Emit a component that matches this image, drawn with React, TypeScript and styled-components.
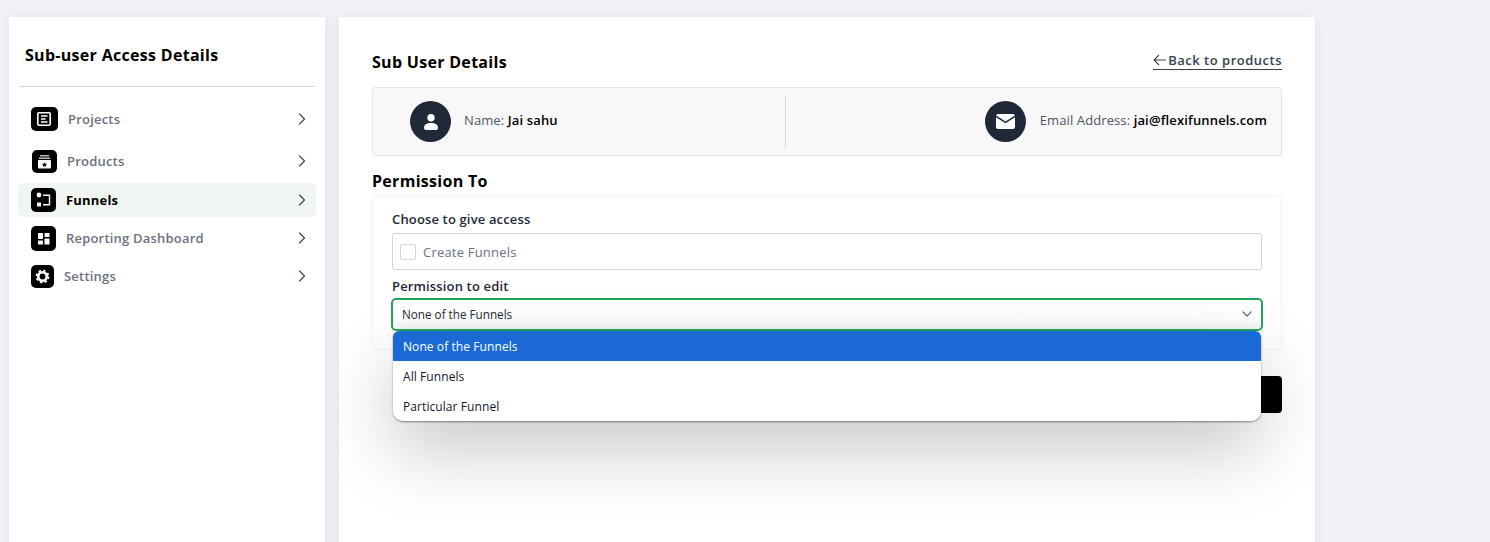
import React from "react";
import styled, { createGlobalStyle } from "styled-components";
import { ChevronRight, ChevronDown } from "lucide-react";

const GlobalStyle = createGlobalStyle`
  html, body {
    margin: 0;
    height: 100%;
    background: #f1f2f7;
    font-family: "Open Sans", "Liberation Sans", sans-serif;
    overflow: hidden;
  }
  * { box-sizing: border-box; }
`;

const Page = styled.div`
  display: flex;
  align-items: flex-start;
  gap: 14px;
  width: 1490px;
  height: 542px;
  padding: 17px 0 0 9px;
  overflow: hidden;
`;

const Sidebar = styled.aside`
  width: 316px;
  height: 560px;
  flex: none;
  background: #fff;
  padding: 27px 9px 0;
  box-shadow: 0 2px 12px rgba(80, 84, 120, 0.1);
`;

const SideTitle = styled.h2`
  margin: 0 0 0 7px;
  font-size: 16px;
  line-height: 22px;
  font-weight: 700;
  letter-spacing: 0.3px;
  color: #000;
`;

const SideRule = styled.hr`
  margin: 20px 1px 11px;
  border: 0;
  border-top: 1px solid #d5d5dc;
`;

const Nav = styled.nav`
  display: flex;
  flex-direction: column;
`;

const NavItem = styled.div<{ $active?: boolean; $height: number }>`
  display: flex;
  align-items: center;
  gap: 10px;
  height: ${(p) => p.$height}px;
  margin-top: ${(p) => (p.$active ? 1 : 0)}px;
  padding: 0 4px 0 13px;
  border-radius: 6px;
  background: ${(p) => (p.$active ? "#f0f5f2" : "transparent")};
  color: ${(p) => (p.$active ? "#000" : "#6b7280")};
  font-size: 13px;
  font-weight: ${(p) => (p.$active ? 700 : 600)};
  letter-spacing: 0.2px;
`;

const NavLabel = styled.span`
  flex: 1;
`;

const NavIcon = styled.svg<{ $inset?: number }>`
  flex: none;
  display: block;
  margin-left: ${(p) => p.$inset ?? 0}px;
`;

const Main = styled.main`
  position: relative;
  width: 976px;
  height: 560px;
  flex: none;
  overflow: hidden;
  background: #fff;
  padding: 33px 33px 0;
`;

const MainShade = styled.div`
  flex: none;
  box-shadow: 0 2px 12px rgba(80, 84, 120, 0.1);
`;

const HeadRow = styled.div`
  display: flex;
  align-items: flex-start;
  justify-content: space-between;
  height: 37px;
`;

const PageTitle = styled.h1`
  margin: 0;
  font-size: 16px;
  line-height: 24px;
  font-weight: 700;
  letter-spacing: 0.3px;
  color: #000;
`;

const BackLink = styled.a`
  display: flex;
  align-items: center;
  gap: 2px;
  height: 20px;
  border-bottom: 1px solid #374151;
  color: #374151;
  font-size: 13px;
  font-weight: 600;
  letter-spacing: 0.5px;
`;

const InfoBar = styled.section`
  display: flex;
  align-items: center;
  height: 69px;
  border: 1px solid #e5e5e5;
  border-radius: 3px;
  background: #f8f8f8;
`;

const NameCell = styled.div`
  width: 412px;
  flex: none;
  display: flex;
  align-items: center;
  gap: 13px;
  padding-left: 37px;
`;

const EmailCell = styled.div`
  flex: 1;
  display: flex;
  align-items: center;
  justify-content: flex-end;
  gap: 14px;
  padding-right: 14px;
`;

const InfoDivider = styled.div`
  width: 1px;
  height: 53px;
  flex: none;
  background: #d9d9d9;
`;

const Avatar = styled.div`
  width: 41px;
  height: 41px;
  flex: none;
  display: flex;
  align-items: center;
  justify-content: center;
  border-radius: 50%;
  background: #1f2937;
`;

const InfoText = styled.span`
  padding-bottom: 3px;
  font-size: 13px;
  color: #4b5563;
  letter-spacing: 0.1px;
  b {
    font-weight: 600;
    color: #000;
    letter-spacing: 0.15px;
  }
`;

const SectionTitle = styled.h3`
  margin: 13px 0 2px;
  font-size: 16px;
  line-height: 24px;
  font-weight: 700;
  letter-spacing: 0.3px;
  color: #000;
`;

const PermissionCard = styled.section`
  height: 155px;
  padding: 14px 19px 0;
  border: 1px solid #f2f2f2;
  border-radius: 3px;
  background: #fff;
`;

const FieldLabel = styled.div`
  font-size: 13px;
  line-height: 18px;
  font-weight: 600;
  color: #1f2937;
  letter-spacing: 0.15px;
`;

const CheckBoxRow = styled.div`
  display: flex;
  align-items: center;
  gap: 7px;
  height: 37px;
  margin: 5px 0 7px;
  padding: 0 7px;
  border: 1px solid #d1d5db;
  border-radius: 3px;
  color: #6b7280;
  font-size: 13px;
  letter-spacing: 0.2px;
`;

const CheckBox = styled.span`
  width: 16px;
  height: 16px;
  border: 1px solid #d1d5db;
  border-radius: 2px;
`;

const SelectWrap = styled.div`
  position: relative;
  margin: 3px -1px 0;
`;

const SelectBox = styled.div`
  display: flex;
  align-items: center;
  justify-content: space-between;
  height: 33px;
  padding: 0 6px 1px 9px;
  border: 2px solid #22a55a;
  border-radius: 5px;
  font-size: 11.7px;
  color: #1f2937;
  background: linear-gradient(#fff 60%, #f3f3f3);
`;

const SelectMenu = styled.ul`
  position: absolute;
  top: 33px;
  left: 2px;
  right: 2px;
  margin: 0;
  padding: 0;
  list-style: none;
  overflow: hidden;
  background: #fff;
  border-radius: 6px 6px 10px 10px;
  box-shadow: 0 1px 2px rgba(0, 0, 0, 0.45), 0 30px 70px rgba(0, 0, 0, 0.21);
`;

const SelectOption = styled.li<{ $selected?: boolean }>`
  display: flex;
  align-items: center;
  height: 30px;
  padding: 0 10px;
  font-size: 12px;
  letter-spacing: 0.08px;
  color: ${(p) => (p.$selected ? "#fff" : "#111827")};
  background: ${(p) => (p.$selected ? "#1a69d4" : "#fff")};
`;

const ActionRow = styled.div`
  display: flex;
  justify-content: flex-end;
  margin-top: 26px;
`;

const SaveButton = styled.button`
  width: 140px;
  height: 37px;
  border: 0;
  border-radius: 4px;
  background: #000;
`;

const IconArrowBack = () => (
  <svg width="13" height="12" viewBox="0 0 13 12">
    <path d="M13 6H1M6 1L1 6l5 5" fill="none" stroke="#374151" strokeWidth="1.1" />
  </svg>
);

const IconProjects = () => (
  <NavIcon width="27" height="24" viewBox="0 0 27 24">
    <rect width="27" height="24" rx="5" fill="#000" />
    <rect x="6.8" y="5.8" width="12.400" height="12.400" rx="1.2" fill="none" stroke="#fff" strokeWidth="1.6" />
    <path d="M10 9h6.500M10 12h4.500M10 15h6.500" stroke="#fff" strokeWidth="1.3" />
  </NavIcon>
);

const IconProducts = () => (
  <NavIcon $inset={1} width="25" height="23" viewBox="0 0 25 23">
    <rect width="25" height="23" rx="5" fill="#000" />
    <path d="M8 5h9v1.400H8zM6.800 7.600h11.400V9H6.800z" fill="#bbb" />
    <path d="M6 11a1 1 0 0 1 1-1h11a1 1 0 0 1 1 1v6.500a1 1 0 0 1-1 1H7a1 1 0 0 1-1-1z" fill="#fff" />
    <path d="M12.500 12.200l.8 1.600 1.700.2-1.300 1.200.4 1.700-1.600-.9-1.600.9.4-1.700-1.300-1.200 1.700-.2z" fill="#000" />
  </NavIcon>
);

const IconFunnels = () => (
  <NavIcon width="25" height="24" viewBox="0 0 25 24">
    <rect width="25" height="24" rx="5" fill="#000" />
    <circle cx="8" cy="7" r="2.400" fill="#fff" />
    <rect x="6" y="14.500" width="4" height="4" rx="0.5" fill="#fff" />
    <path d="M12 7.200h6.500v9.600H12" fill="none" stroke="#fff" strokeWidth="1.4" />
  </NavIcon>
);

const IconDashboard = () => (
  <NavIcon width="25" height="25" viewBox="0 0 25 25">
    <rect width="25" height="25" rx="5" fill="#000" />
    <rect x="7" y="7" width="5" height="6" rx="0.6" fill="#fff" />
    <rect x="13.500" y="7" width="5" height="4" rx="0.6" fill="#fff" />
    <rect x="7" y="14.500" width="5" height="4" rx="0.6" fill="#fff" />
    <rect x="13.500" y="12.500" width="5" height="6" rx="0.6" fill="#fff" />
  </NavIcon>
);

const IconSettings = () => (
  <NavIcon width="23" height="23" viewBox="0 0 23 23">
    <rect width="23" height="23" rx="5" fill="#000" />
    <circle cx="11.500" cy="11.500" r="4.200" fill="none" stroke="#fff" strokeWidth="2.600" />
    <circle
      cx="11.500"
      cy="11.500"
      r="6"
      fill="none"
      stroke="#fff"
      strokeWidth="1.800"
      strokeDasharray="2.400 2.310"
    />
  </NavIcon>
);

const IconUser = () => (
  <svg width="16" height="18" viewBox="0 0 16 18">
    <circle cx="8" cy="4.700" r="3.700" fill="#fff" />
    <path d="M1 15c0-3.200 2.600-5 7-5s7 1.800 7 5c0 1.300-1 2-2 2H3c-1 0-2-.7-2-2z" fill="#fff" />
  </svg>
);

const IconMail = () => (
  <svg width="19" height="15" viewBox="0 0 19 15">
    <path d="M2 0h15a2 2 0 0 1 1.900 1.500L9.500 7.500.1 1.500A2 2 0 0 1 2 0z" fill="#fff" />
    <path d="M0 3.300l9.500 6 9.500-6V13a2 2 0 0 1-2 2H2a2 2 0 0 1-2-2z" fill="#fff" />
  </svg>
);

const navItems = [
  { label: "Projects", icon: <IconProjects />, height: 42 },
  { label: "Products", icon: <IconProducts />, height: 42 },
  { label: "Funnels", icon: <IconFunnels />, height: 34, active: true },
  { label: "Reporting Dashboard", icon: <IconDashboard />, height: 42 },
  { label: "Settings", icon: <IconSettings />, height: 34 },
];

const App = () => {
  return (
    <>
      <GlobalStyle />
      <Page>
        <Sidebar>
          <SideTitle>Sub-user Access Details</SideTitle>
          <SideRule />
          <Nav>
            {navItems.map((item) => (
              <NavItem key={item.label} $active={item.active} $height={item.height}>
                {item.icon}
                <NavLabel>{item.label}</NavLabel>
                <ChevronRight size={20} color="#374151" strokeWidth={1.3} />
              </NavItem>
            ))}
          </Nav>
        </Sidebar>
        <MainShade>
          <Main>
            <HeadRow>
              <PageTitle>Sub User Details</PageTitle>
              <BackLink>
                <IconArrowBack />
                Back to products
              </BackLink>
            </HeadRow>
            <InfoBar>
              <NameCell>
                <Avatar>
                  <IconUser />
                </Avatar>
                <InfoText>
                  Name: <b>Jai sahu</b>
                </InfoText>
              </NameCell>
              <InfoDivider />
              <EmailCell>
                <Avatar>
                  <IconMail />
                </Avatar>
                <InfoText>
                  Email Address: <b>jai@flexifunnels.com</b>
                </InfoText>
              </EmailCell>
            </InfoBar>
            <SectionTitle>Permission To</SectionTitle>
            <PermissionCard>
              <FieldLabel>Choose to give access</FieldLabel>
              <CheckBoxRow>
                <CheckBox />
                Create Funnels
              </CheckBoxRow>
              <FieldLabel>Permission to edit</FieldLabel>
              <SelectWrap>
                <SelectBox>
                  None of the Funnels
                  <ChevronDown size={16} color="#6b7280" strokeWidth={2} />
                </SelectBox>
                <SelectMenu>
                  <SelectOption $selected>None of the Funnels</SelectOption>
                  <SelectOption>All Funnels</SelectOption>
                  <SelectOption>Particular Funnel</SelectOption>
                </SelectMenu>
              </SelectWrap>
            </PermissionCard>
            <ActionRow>
              <SaveButton />
            </ActionRow>
          </Main>
        </MainShade>
      </Page>
    </>
  );
};

export default App;
